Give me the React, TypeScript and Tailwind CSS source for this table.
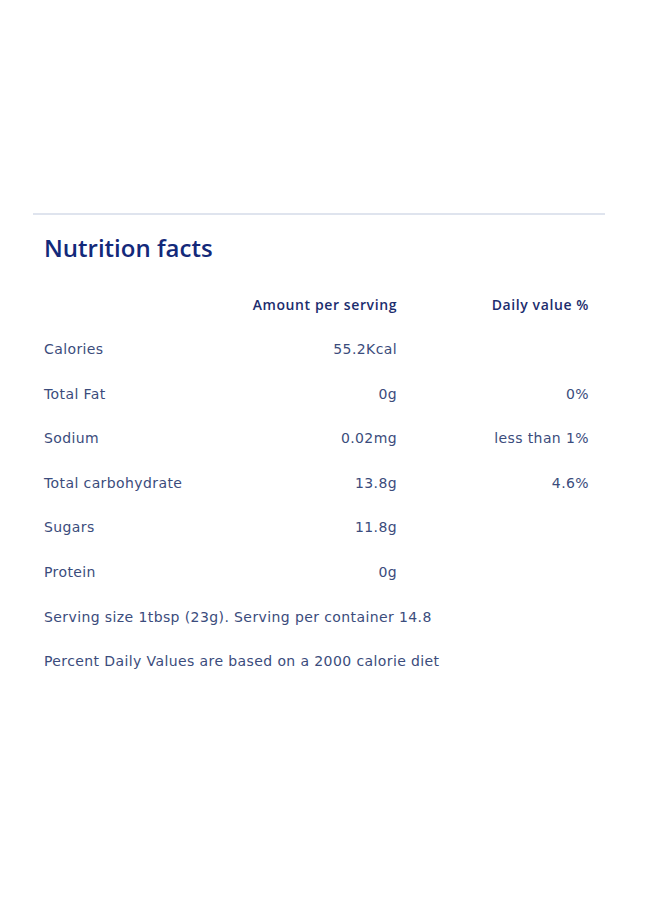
import React from "react";

const rows = [
  { name: "Calories", amount: "55.2Kcal", daily: "" },
  { name: "Total Fat", amount: "0g", daily: "0%" },
  { name: "Sodium", amount: "0.02mg", daily: "less than 1%" },
  { name: "Total carbohydrate", amount: "13.8g", daily: "4.6%" },
  { name: "Sugars", amount: "11.8g", daily: "" },
  { name: "Protein", amount: "0g", daily: "" },
];

const App = () => {
  return (
    <div className="min-h-[900px] w-[660px] bg-white font-['DejaVu_Sans',sans-serif]">
      <div className="pt-[213px] pl-[33px] w-[605px]">
        {/* Divider */}
        <div className="h-[2px] bg-[#dfe4ee]" />

        <div className="pl-[11px] pr-[16px]">
          <h2 className="mt-[16px] h-[34px] leading-[34px] text-[24px] font-semibold text-[#13297a] font-['Open_Sans',sans-serif]">
            Nutrition facts
          </h2>

          {/* Table */}
          <div className="mt-[28px] grid grid-cols-[1fr_150px_192px] text-[14px] tracking-[0.6px] text-[#1c2d6e] font-['Open_Sans',sans-serif]">
            <div className="h-[24px]" />
            <div className="h-[24px] leading-[24px] text-right font-semibold">
              Amount per serving
            </div>
            <div className="h-[24px] leading-[24px] text-right font-semibold">
              Daily value %
            </div>
          </div>

          <div className="mt-[10px] grid grid-cols-[1fr_150px_192px] text-[14px] tracking-[0.4px] text-[#3b4c7c]">
            {rows.map((r) => (
              <React.Fragment key={r.name}>
                <div className="h-[44.6px] leading-[44.6px]">{r.name}</div>
                <div className="h-[44.6px] leading-[44.6px] text-right">{r.amount}</div>
                <div className="h-[44.6px] leading-[44.6px] text-right">{r.daily}</div>
              </React.Fragment>
            ))}
          </div>

          <p className="h-[44.6px] leading-[44.6px] text-[14px] tracking-[0.4px] text-[#3b4c7c]">
            Serving size 1tbsp (23g). Serving per container 14.8
          </p>
          <p className="h-[44.6px] leading-[44.6px] text-[14px] tracking-[0.4px] text-[#3b4c7c]">
            Percent Daily Values are based on a 2000 calorie diet
          </p>
        </div>
      </div>
    </div>
  );
};

export default App;
